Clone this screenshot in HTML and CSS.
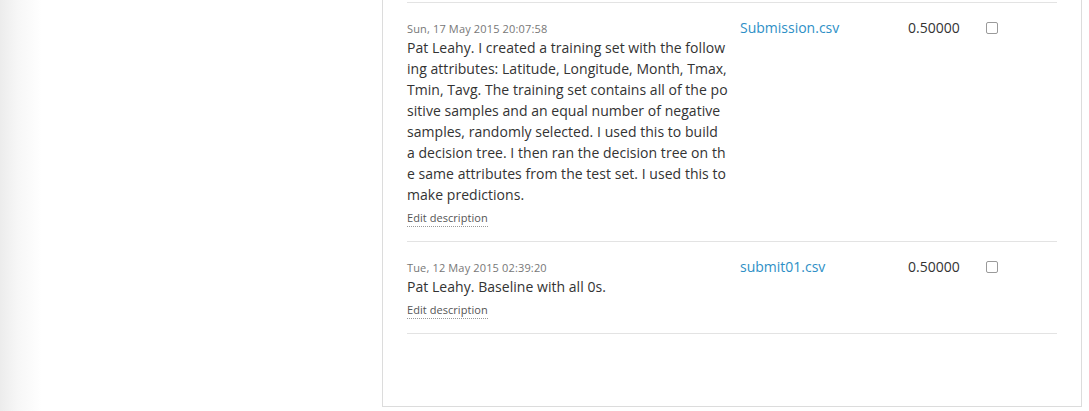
FILE: index.html
```html
<!DOCTYPE html>
<html>
<head>
<meta charset="utf-8">
<link rel="stylesheet" href="styles.css">
</head>
<body>
<div class="page">
  <aside class="sidebar"></aside>
  <main class="panel">
    <div class="subs">
      <div class="sub">
        <div class="desc">
          <div class="date">Sun, 17 May 2015 20:07:58</div>
          <div class="text">Pat Leahy. I created a training set with the follow<br>ing attributes: Latitude, Longitude, Month, Tmax,<br>Tmin, Tavg. The training set contains all of the po<br>sitive samples and an equal number of negative<br>samples, randomly selected. I used this to build<br>a decision tree. I then ran the decision tree on th<br>e same attributes from the test set. I used this to<br>make predictions.</div>
          <a class="edit">Edit description</a>
        </div>
        <a class="file">Submission.csv</a>
        <div class="score">0.50000</div>
        <div class="check"><span class="box"></span></div>
      </div>
      <div class="sub">
        <div class="desc">
          <div class="date">Tue, 12 May 2015 02:39:20</div>
          <div class="text">Pat Leahy. Baseline with all 0s.</div>
          <a class="edit">Edit description</a>
        </div>
        <a class="file">submit01.csv</a>
        <div class="score">0.50000</div>
        <div class="check"><span class="box"></span></div>
      </div>
    </div>
  </main>
</div>
</body>
</html>
```
FILE: styles.css
```css
html, body {
  margin: 0;
  padding: 0;
  background: #fff;
}
body {
  font-family: "Open Sans", "Liberation Sans", sans-serif;
  color: #333;
}
.page {
  display: flex;
  align-items: flex-start;
  width: 1089px;
  height: 411px;
  overflow: hidden;
}
.sidebar {
  width: 382px;
  height: 411px;
  flex: none;
  background: linear-gradient(to right, #ececec 0, #f7f7f7 18px, #fff 42px);
}
.panel {
  width: 700px;
  flex: none;
  border: 1px solid #dcdcdc;
  border-top: none;
  padding: 2px 24px 72px;
  box-sizing: border-box;
  background: #fff;
}
.subs {
  border-bottom: 1px solid #e3e3e3;
}
.sub {
  display: grid;
  grid-template-columns: 333px 168px 78px 1fr;
  align-items: start;
  border-top: 1px solid #e3e3e3;
  padding: 17px 0 14px;
}
.date {
  font-size: 11px;
  line-height: 17px;
  letter-spacing: 0.15px;
  color: #777;
}
.text {
  font-size: 14px;
  line-height: 21px;
  letter-spacing: 0.04px;
  color: #333;
  white-space: nowrap;
}
.edit {
  display: inline-block;
  margin-top: 5px;
  font-size: 11px;
  line-height: 16px;
  letter-spacing: 0.05px;
  color: #555;
  border-bottom: 1px dotted #999;
}
.file {
  font-size: 14px;
  line-height: 16px;
  color: #2e8fc6;
}
.score {
  font-size: 14px;
  line-height: 16px;
  color: #333;
}
.check {
  padding-top: 2px;
}
.box {
  display: block;
  width: 10px;
  height: 10px;
  border: 1px solid #9a9a9a;
  border-radius: 2px;
  background: #fff;
}
```
